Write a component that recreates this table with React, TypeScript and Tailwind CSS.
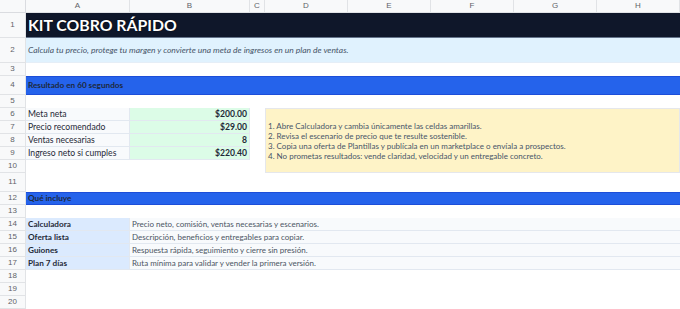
import React from 'react';

const cols = ['A', 'B', 'C', 'D', 'E', 'F', 'G', 'H'];
const colStarts = ['col-start-2', 'col-start-3', 'col-start-4', 'col-start-5', 'col-start-6', 'col-start-7', 'col-start-8', 'col-start-9'];
const rowStarts = [
  'row-start-2', 'row-start-3', 'row-start-4', 'row-start-5', 'row-start-6', 'row-start-7', 'row-start-8',
  'row-start-9', 'row-start-10', 'row-start-11', 'row-start-12', 'row-start-13', 'row-start-14', 'row-start-15',
  'row-start-16', 'row-start-17', 'row-start-18', 'row-start-19', 'row-start-20', 'row-start-21',
];

const resumen = [
  { label: 'Meta neta', value: '$200.00' },
  { label: 'Precio recomendado', value: '$29.00' },
  { label: 'Ventas necesarias', value: '8' },
  { label: 'Ingreso neto si cumples', value: '$220.40' },
];

const pasos = [
  '1. Abre Calculadora y cambia únicamente las celdas amarillas.',
  '2. Revisa el escenario de precio que te resulte sostenible.',
  '3. Copia una oferta de Plantillas y publícala en un marketplace o envíala a prospectos.',
  '4. No prometas resultados: vende claridad, velocidad y un entregable concreto.',
];

const incluye = [
  { label: 'Calculadora', desc: 'Precio neto, comisión, ventas necesarias y escenarios.' },
  { label: 'Oferta lista', desc: 'Descripción, beneficios y entregables para copiar.' },
  { label: 'Guiones', desc: 'Respuesta rápida, seguimiento y cierre sin presión.' },
  { label: 'Plan 7 días', desc: 'Ruta mínima para validar y vender la primera versión.' },
];

export default function App() {
  return (
    <div className="w-[680px] h-[309px] overflow-hidden bg-white">
      <div
        className="grid grid-cols-[26px_104px_120px_15px_83px_83px_83px_83px_83px] grid-rows-[13px_25px_25px_13px_19px_13px_13px_13px_13px_13px_13px_19px_13px_13px_13px_13px_13px_13px_13px_13px_13px] text-[8px] text-[#1f2937]"
        style={{ fontFamily: 'Lato, "Open Sans", sans-serif' }}
      >
        {/* esquina y cabeceras de columna */}
        <div className="col-start-1 row-start-1 bg-[#f8f9fa] border-r border-b border-[#dadce0]" />
        {cols.map((c, i) => (
          <div
            key={c}
            className={`${colStarts[i]} row-start-1 flex items-center justify-center bg-[#f8f9fa] border-r border-b border-[#e1e3e6] text-[8px] text-[#5f6368]`}
            style={{ fontFamily: '"Liberation Sans", Arial, sans-serif' }}
          >
            {c}
          </div>
        ))}

        {/* números de fila */}
        {rowStarts.map((r, i) => (
          <div
            key={r}
            className={`col-start-1 ${r} flex items-center justify-center bg-[#f8f9fa] border-r border-b border-[#e1e3e6] text-[8px] text-[#5f6368]`}
            style={{ fontFamily: '"Liberation Sans", Arial, sans-serif' }}
          >
            {i + 1}
          </div>
        ))}

        {/* fila 1: título */}
        <div className="[grid-column:2/10] [grid-row:2/3] min-w-0 flex items-center pl-[2px] bg-[#0f172a] border-b border-[#64748b]">
          <span className="text-[15.8px] font-bold text-white [text-shadow:0_0_1.5px_#000]">KIT COBRO RÁPIDO</span>
        </div>

        {/* fila 2: subtítulo */}
        <div className="[grid-column:2/10] [grid-row:3/4] min-w-0 flex items-center pl-[2px] bg-[#e0f2fe] border-b border-[#e5eef7]">
          <span className="italic text-[8.5px] text-[#475569]">
            Calcula tu precio, protege tu margen y convierte una meta de ingresos en un plan de ventas.
          </span>
        </div>

        {/* fila 4 */}
        <div className="[grid-column:2/10] [grid-row:5/6] min-w-0 flex items-center pl-[2px] bg-[#2563eb] border-t border-b border-[#1d4ed8]">
          <span className="font-bold text-[8.2px] text-[#1e293b]">Resultado en 60 segundos</span>
        </div>

        {/* filas 6-9 */}
        {resumen.map((r, i) => (
          <React.Fragment key={r.label}>
            <div className={`col-start-2 ${rowStarts[i + 5]} min-w-0 flex items-center pl-[2px] bg-[#f8fafc] border-b border-r border-[#e2e8f0] text-[8.6px] text-[#1f2937]`}>
              {r.label}
            </div>
            <div className={`col-start-3 ${rowStarts[i + 5]} min-w-0 flex items-center justify-end pr-[2px] bg-[#dcfce7] border-b border-r border-[#e2e8f0] font-bold text-[8.6px] text-[#1f2937]`}>
              {r.value}
            </div>
          </React.Fragment>
        ))}

        {/* pasos */}
        <div className="[grid-column:5/10] [grid-row:7/12] min-w-0 overflow-hidden flex flex-col justify-center pl-[2px] bg-[#fef3c7] border border-[#e5e7eb] text-[#475569] leading-[10px]">
          {pasos.map((p) => (
            <div key={p} className="whitespace-nowrap">{p}</div>
          ))}
        </div>

        {/* fila 12 */}
        <div className="[grid-column:2/10] [grid-row:13/14] min-w-0 flex items-center pl-[2px] bg-[#2563eb] border-t border-b border-[#1d4ed8]">
          <span className="font-bold text-[8.2px] text-[#1e293b]">Qué incluye</span>
        </div>

        {/* filas 14-17 */}
        {incluye.map((r, i) => (
          <React.Fragment key={r.label}>
            <div className={`col-start-2 ${rowStarts[i + 13]} min-w-0 flex items-center pl-[2px] bg-[#dbeafe] border-b border-r border-[#e2e8f0] font-bold text-[8.2px] text-[#1f2937]`}>
              {r.label}
            </div>
            <div className={`[grid-column:3/10] ${rowStarts[i + 13]} min-w-0 flex items-center pl-[2px] bg-[#f8fafc] border-b border-[#e2e8f0] text-[#4b5563]`}>
              {r.desc}
            </div>
          </React.Fragment>
        ))}
      </div>
    </div>
  );
}
